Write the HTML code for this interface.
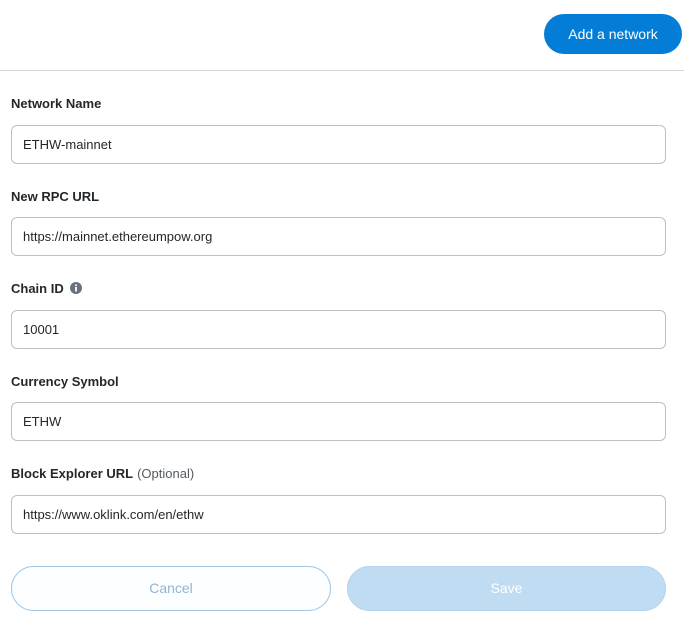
<!DOCTYPE html>
<html><head><meta charset="utf-8"><style>
body{margin:0;width:693px;height:625px;background:#fff;font-family:"Liberation Sans",sans-serif;position:relative;overflow:hidden;color:#24272a}
.btn{position:absolute;left:544px;top:14px;width:138px;height:40px;border-radius:20px;background:#037dd6;color:#fff;font-size:14px;line-height:40px;text-align:center}
.hr{position:absolute;left:0;top:70px;width:684px;height:1px;background:#d6d9dc}
.lbl{position:absolute;left:11px;font-size:13px;font-weight:bold;color:#24272a}
.lbl span{font-weight:normal;color:#535a61;margin-left:4px}
.in{position:absolute;left:11px;height:37px;border:1px solid #bbc0c5;border-radius:6px;box-sizing:content-box;font-size:13px;line-height:37px;padding-left:11px;width:642px;color:#24272a}
.b2{position:absolute;top:566px;height:45px;border-radius:23px;box-sizing:border-box;font-size:14px;line-height:43px;text-align:center}
</style></head><body>
<div class="btn">Add a network</div>
<div class="hr"></div>
<div class="lbl" style="top:96px">Network Name</div>
<div class="in" style="top:125px">ETHW-mainnet</div>
<div class="lbl" style="top:189px">New RPC URL</div>
<div class="in" style="top:217px">https://mainnet.ethereumpow.org</div>
<div class="lbl" style="top:281px">Chain ID <svg width="12" height="12" viewBox="0 0 12 12" style="vertical-align:-1px;margin-left:3px"><circle cx="6" cy="6" r="6" fill="#6a737d"/><rect x="5.1" y="5" width="1.8" height="4.5" fill="#fff"/><circle cx="6" cy="3.3" r="1" fill="#fff"/></svg></div>
<div class="in" style="top:310px">10001</div>
<div class="lbl" style="top:374px">Currency Symbol</div>
<div class="in" style="top:402px">ETHW</div>
<div class="lbl" style="top:466px">Block Explorer URL<span>(Optional)</span></div>
<div class="in" style="top:495px">https://www.oklink.com/en/ethw</div>
<div class="b2" style="left:11px;width:320px;border:1px solid #9fc7e6;color:#8fb5d6;background:#fcfeff">Cancel</div>
<div class="b2" style="left:347px;width:319px;background:#c0dcf2;color:#fff;border:1px solid #b5d3ec">Save</div>
</body></html>
